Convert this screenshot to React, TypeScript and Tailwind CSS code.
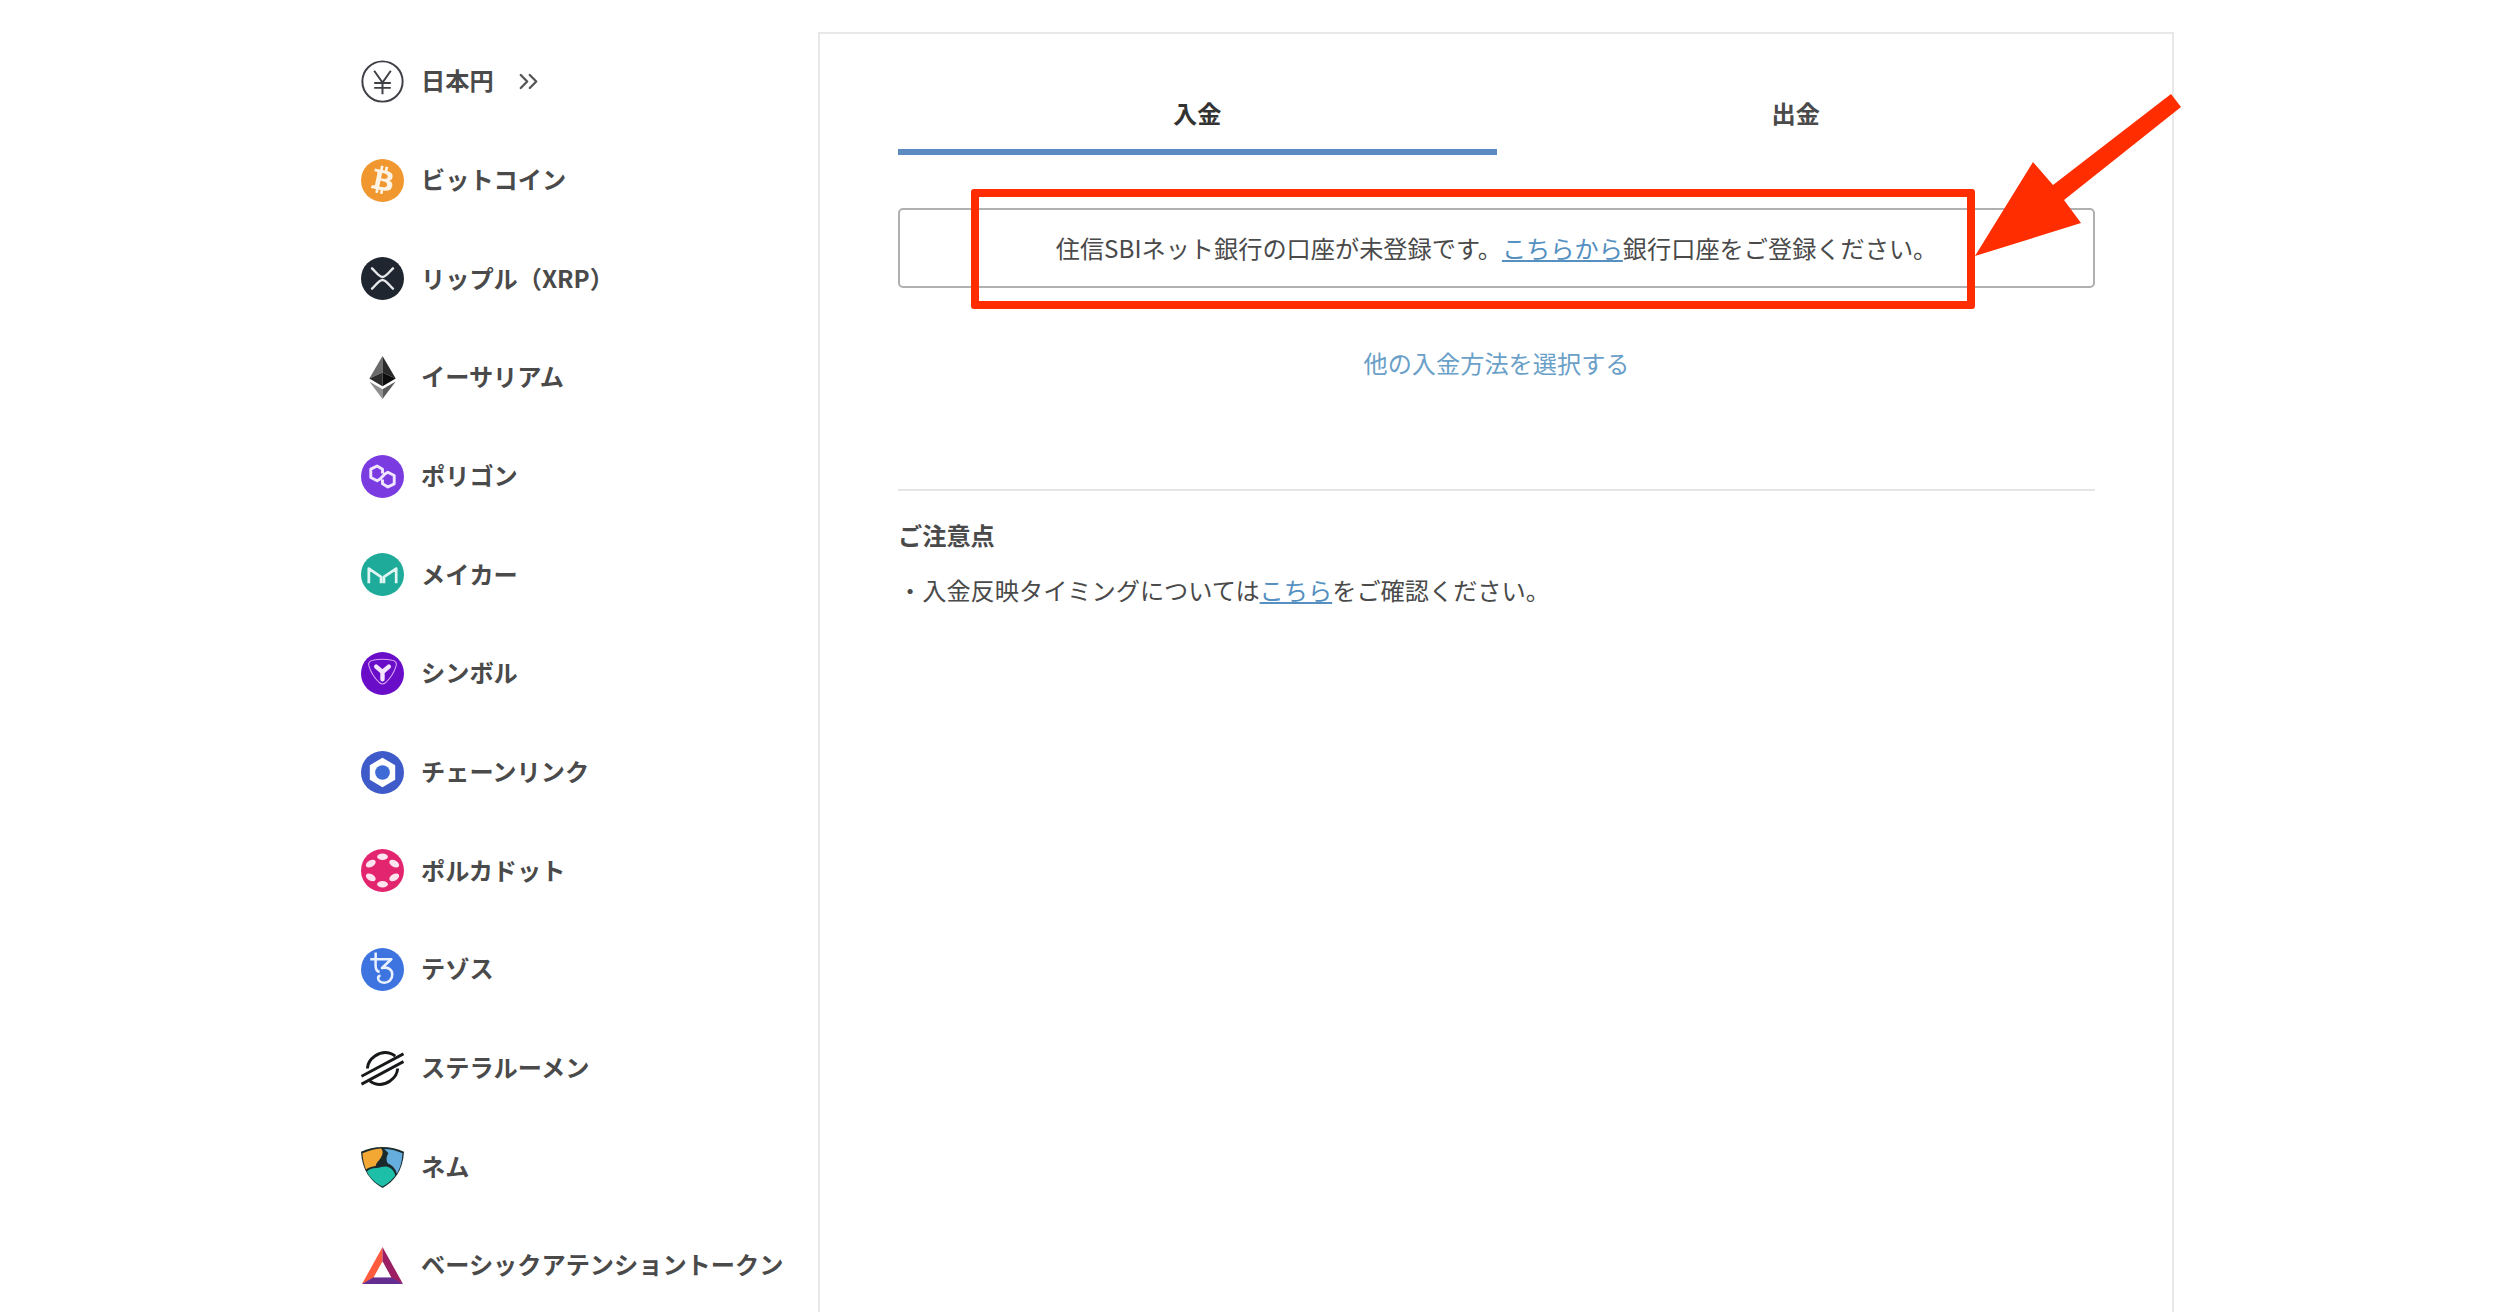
import React from 'react';
import { ChevronsRight } from 'lucide-react';
import { FaBtc } from 'react-icons/fa';

const YenIcon = () => (
  <svg viewBox="0 0 44 44" className="w-[43px] h-[43px]" fill="none" stroke="#3f3f46">
    <circle cx="22" cy="22" r="20.6" strokeWidth="2" />
    <path d="M13.500 11l8.500 12 8.500-12M22 23v12M13.500 23.500h17M13.500 28.500h17" strokeWidth="2" />
  </svg>
);

const BtcIcon = () => (
  <div className="relative flex w-[43px] h-[43px] items-center justify-center rounded-full bg-[#f0982f]">
    <FaBtc className="w-[28px] h-[28px] text-[#fdf3e4] rotate-[12deg]" />
  </div>
);

const XrpIcon = () => (
  <svg viewBox="0 0 44 44" className="w-[43px] h-[43px]" fill="none">
    <circle cx="22" cy="22" r="22" fill="#1f2630" />
    <path d="M10.500 11c3 2 7.500 9.500 11.500 9.500S30.500 13 33.500 11M10.500 33c3-2 7.500-9.500 11.500-9.500S30.500 31 33.500 33" stroke="#e6e8ea" strokeWidth="2.400" />
  </svg>
);

const EthIcon = () => (
  <svg viewBox="0 0 44 44" className="w-[43px] h-[43px]">
    <polygon points="22,0 8.500,23 22,17" fill="#6b6b6b" />
    <polygon points="22,0 35.500,23 22,17" fill="#2a2a2a" />
    <polygon points="8.500,23 22,17 22,31" fill="#2b2b2b" />
    <polygon points="35.500,23 22,17 22,31" fill="#0d0d0d" />
    <polygon points="8.500,26 22,34 22,44" fill="#8f8f8f" />
    <polygon points="35.500,26 22,34 22,44" fill="#5a5a5a" />
  </svg>
);

const PolygonIcon = () => (
  <svg viewBox="0 0 44 44" className="w-[43px] h-[43px]" fill="none">
    <circle cx="22" cy="22" r="22" fill="#7a3be0" />
    <path d="M22 19v-4.500l-5.500-3.200-6.500 3.200v8.500l6.500 3.300 3.500-2M22 25v4.500l5.500 3.200 6.500-3.200V21l-6.500-3.300-3.500 2M19.500 24.500l5-5" stroke="#f1e6ff" strokeWidth="3" strokeLinejoin="round" />
  </svg>
);

const MakerIcon = () => (
  <svg viewBox="0 0 44 44" className="w-[43px] h-[43px]" fill="none">
    <circle cx="22" cy="22" r="22" fill="#1fab9a" />
    <path d="M8 31V16l12.500 8.500V31M36 31V16l-12.500 8.500V31" stroke="#dff6f2" strokeWidth="2.800" strokeLinejoin="round" />
  </svg>
);

const SymbolIcon = () => (
  <svg viewBox="0 0 44 44" className="w-[43px] h-[43px]" fill="none">
    <circle cx="22" cy="22" r="22" fill="#6a0dc8" />
    <path d="M8 14c-1-3 1-5 4-5.500 6-1.200 14-1.200 20 0 3 .500 5 2.500 4 5.500-2 7-6 13-11 17.500-1.800 1.500-4.200 1.500-6 0C14 27 10 21 8 14z" stroke="#d9a6f5" strokeWidth="1.100" />
    <path d="M15.500 15l6.500 5.500 6.500-5.500M22 20.500V28" stroke="#f4e6ff" strokeWidth="4.500" strokeLinecap="round" />
  </svg>
);

const ChainlinkIcon = () => (
  <svg viewBox="0 0 44 44" className="w-[43px] h-[43px]">
    <circle cx="22" cy="22" r="22" fill="#3f5bc9" />
    <polygon points="22,7 35,14.500 35,29.500 22,37 9,29.500 9,14.500" fill="#fff" />
    <circle cx="22" cy="22" r="7.500" fill="#3f6bd6" />
  </svg>
);

const PolkadotIcon = () => (
  <svg viewBox="0 0 44 44" className="w-[43px] h-[43px]">
    <circle cx="22" cy="22" r="22" fill="#e3256f" />
    <g fill="#fde4ee">
      <ellipse cx="22" cy="8" rx="5.500" ry="3.300" />
      <ellipse cx="22" cy="36" rx="5.500" ry="3.300" />
      <ellipse cx="10" cy="15" rx="5.500" ry="3.300" transform="rotate(-30 10 15)" />
      <ellipse cx="34" cy="15" rx="5.500" ry="3.300" transform="rotate(30 34 15)" />
      <ellipse cx="10" cy="29" rx="5.500" ry="3.300" transform="rotate(30 10 29)" />
      <ellipse cx="34" cy="29" rx="5.500" ry="3.300" transform="rotate(-30 34 29)" />
    </g>
  </svg>
);

const TezosIcon = () => (
  <svg viewBox="0 0 44 44" className="w-[43px] h-[43px]" fill="none">
    <circle cx="22" cy="22" r="22" fill="#3d74e0" />
    <path d="M15 4.500v6c0 8-1 13 4 14M9.500 11.500H31l-9.500 9c6-1.500 10.500 1.500 10.500 6.500 0 5-3.500 8.500-8 8.500-4.500 0-6.500-2.500-6.500-4.500 0-1.500 1-2.500 2.500-2.500" stroke="#eaf1ff" strokeWidth="2.600" strokeLinejoin="round" />
  </svg>
);

const StellarIcon = () => (
  <svg viewBox="0 0 44 44" className="w-[43px] h-[43px]" fill="none" stroke="#17181a" strokeWidth="3">
    <path d="M0.500 30L43.500 7M0.500 38L43.500 15" />
    <path d="M6.500 22C7 12 19 3 30 6.500c2 .6 3.500 1.500 5 2.800M37.500 22C37 32 25 41 14 37.500c-2-.6-3.500-1.500-5-2.800" />
  </svg>
);

const NemIcon = () => (
  <svg viewBox="0 0 44 44" className="w-[43px] h-[43px]">
    <path d="M22 44C10 37.500 1 26 0 7c6.500-3.500 14-5 22-5s15.500 1.500 22 5c-1 19-10 30.500-22 37z" fill="#1b2a2c" />
    <path d="M1.500 8.500C8 5.500 14 4 20.500 3.500c2.500 2.500 2 6-.5 10-2 3-4.500 4.500-5 8-4 .500-7.500 1.500-10 3.500C2.800 19.500 1.800 14 1.500 8.500z" fill="#f2a832" />
    <path d="M23.500 4c6.500 0 12.500 1.500 19 4.500-.500 8.500-2.200 15-5.800 21-1.500-5.200-4.200-8.500-9.200-10.500-2.500-4-1-8 .500-10.500-1.200-1.800-3-3.500-4.500-4.500z" fill="#64addc" />
    <path d="M6 27c3-2.500 6-3.500 9.500-3.500 5-.5 9.500-2.500 12-1 4 1.500 7 4.500 7.500 9C31.500 36 27.500 39.500 22 42.500 15 39 9.500 34 6 27z" fill="#1ebfa8" />
  </svg>
);

const BatIcon = () => (
  <svg viewBox="0 0 44 44" className="w-[43px] h-[43px]">
    <polygon points="22,3 1,41 13,35 22,18" fill="#ff5b3e" />
    <polygon points="22,3 43,41 31,35 22,18" fill="#9c1f63" />
    <polygon points="1,41 43,41 31,34 13,34" fill="#662d91" />
    <polygon points="22,18 31,34 13,34" fill="#fff" />
  </svg>
);

const coins = [
  { name: '日本円', icon: <YenIcon />, active: true },
  { name: 'ビットコイン', icon: <BtcIcon /> },
  { name: 'リップル（XRP）', icon: <XrpIcon /> },
  { name: 'イーサリアム', icon: <EthIcon /> },
  { name: 'ポリゴン', icon: <PolygonIcon /> },
  { name: 'メイカー', icon: <MakerIcon /> },
  { name: 'シンボル', icon: <SymbolIcon /> },
  { name: 'チェーンリンク', icon: <ChainlinkIcon /> },
  { name: 'ポルカドット', icon: <PolkadotIcon /> },
  { name: 'テゾス', icon: <TezosIcon /> },
  { name: 'ステラルーメン', icon: <StellarIcon /> },
  { name: 'ネム', icon: <NemIcon /> },
  { name: 'ベーシックアテンショントークン', icon: <BatIcon /> },
];

export default function App() {
  return (
    <div className="relative flex h-[1312px] w-[2500px] overflow-hidden bg-white pl-[361px] pt-[32px] font-['Noto_Sans_CJK_JP','Noto_Sans',sans-serif] text-[24.2px] text-[#4a4a4a]">
      {/* Sidebar */}
      <nav className="w-[457px] shrink-0">
        {coins.map((coin) => (
          <div key={coin.name} className="flex h-[98.7px] items-center gap-[17px]">
            {coin.icon}
            <span className="-mt-[2px] font-bold text-[#4a4a4a] whitespace-nowrap">{coin.name}</span>
            {coin.active && <ChevronsRight className="ml-[2px] w-[31px] h-[31px] text-[#555]" strokeWidth={1.8} />}
          </div>
        ))}
      </nav>

      {/* Main panel */}
      <main className="h-[1300px] w-[1356px] shrink-0 border-x-2 border-t-2 border-[#e8e8e8] pl-[78px] pr-[77px]">
        <div className="grid grid-cols-2">
          <div className="flex h-[121px] items-end justify-center border-b-[6px] border-[#5b8bc0] pb-[20px] font-bold text-[#333]">
            <span className="leading-[32px]">入金</span>
          </div>
          <div className="flex h-[121px] items-end justify-center pb-[26px] font-bold text-[#4a4a4a]">
            <span className="leading-[32px]">出金</span>
          </div>
        </div>

        <div className="mt-[53px] flex h-[80px] items-center justify-center rounded-[5px] border-2 border-[#b0b0b0] leading-[32px]">
          <p>
            住信SBIネット銀行の口座が未登録です。
            <a className="text-[#5590c0] underline">こちらから</a>
            銀行口座をご登録ください。
          </p>
        </div>

        <p className="mt-[59px] text-center leading-[32px] text-[#6a9fc8]">他の入金方法を選択する</p>

        <div className="mt-[110px] border-t-2 border-[#e5e5e5]" />

        <h3 className="mt-[28px] font-bold leading-[32px] text-[#4a4a4a]">ご注意点</h3>
        <p className="mt-[23px] leading-[32px]">
          ・入金反映タイミングについては
          <a className="text-[#5590c0] underline">こちら</a>
          をご確認ください。
        </p>
      </main>

      {/* Annotation overlay */}
      <div className="absolute left-[971px] top-[189px] h-[120px] w-[1004px] rounded-[3px] border-[8px] border-[#ff2d00]" />
      <svg className="absolute left-[1960px] top-[80px] w-[240px] h-[200px]" viewBox="1960 80 240 200">
        <polygon points="1975,256 2033,162 2053,185 2171,94 2181,107 2064,200 2081,223" fill="#ff2d00" />
      </svg>
    </div>
  );
}
